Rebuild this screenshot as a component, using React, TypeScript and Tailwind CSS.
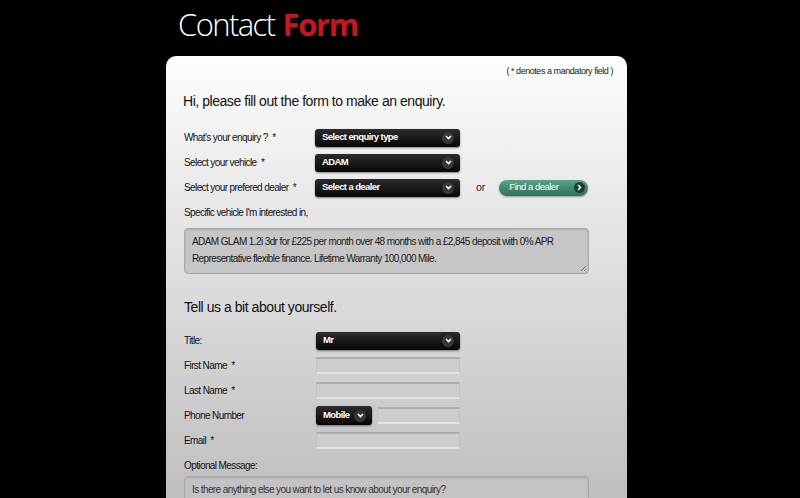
import React from "react";

const font = { fontFamily: '"Liberation Sans", Arial, sans-serif' };

function Chevron({ className = "" }: { className?: string }) {
  return (
    <span
      className={`flex h-[12px] w-[12px] items-center justify-center rounded-full bg-[#383838] ${className}`}
    >
      <svg width="7" height="5" viewBox="0 0 7 5">
        <path d="M1 1 L3.5 3.5 L6 1" fill="none" stroke="#fff" strokeWidth="1.6" />
      </svg>
    </span>
  );
}

function Select({ value, width = "w-[145px]", height = "h-[18px]" }: { value: string; width?: string; height?: string }) {
  return (
    <div
      className={`flex ${width} ${height} items-center justify-between rounded-[3px] bg-gradient-to-b from-[#2c2c2c] to-[#080808] pl-[7px] pr-[6px] text-[9.5px] font-bold tracking-[-0.6px] text-white shadow-[0_1px_2px_rgba(0,0,0,0.45)]`}
    >
      <span>{value}</span>
      <Chevron />
    </div>
  );
}

function Input({ width = "w-[144px]" }: { width?: string }) {
  return (
    <div
      className={`h-[17px] ${width} border border-[#c2c2c2] border-t-2 border-t-[#adadad] border-b-2 border-b-[#e3e3e3] bg-[#cdcdcd]`}
    />
  );
}

function Row({ label, children, labelW = "w-[131px]" }: { label: string; children: React.ReactNode; labelW?: string }) {
  return (
    <div className="flex h-[25px] items-center">
      <div className={`${labelW} whitespace-pre text-[10px] tracking-[-0.6px] text-[#111]`}>{label}</div>
      {children}
    </div>
  );
}

function Grip() {
  return (
    <svg className="absolute bottom-[1px] right-[1px]" width="8" height="8" viewBox="0 0 8 8">
      <path d="M7 2 L2 7 M7 5 L5 7" stroke="#777" strokeWidth="1" />
    </svg>
  );
}

export default function App() {
  return (
    <div className="h-[498px] w-[800px] overflow-hidden bg-black" style={font}>
      <div className="ml-[166px] w-[461px]">
        <div className="h-[56px] pl-[12px] pt-[4px]">
          <h1
            className="text-[31px] leading-[40px] text-white"
            style={{ fontFamily: '"Open Sans", sans-serif', fontWeight: 300 }}
          >
            <span className="tracking-[-1.6px]">Contact</span>{" "}
            <span className="font-bold tracking-[-1.3px] text-[#c8161e]">Form</span>
          </h1>
        </div>

        <div className="h-[442px] rounded-t-[10px] bg-gradient-to-b from-[#fdfdfd] to-[#bfbfbf] pl-[18px] pr-[14px]">
          <div className="pt-[10px] text-right text-[9px] leading-[10px] tracking-[-0.45px] text-[#222]">
            ( * denotes a mandatory field )
          </div>

          <h2 className="mt-[16px] -ml-[1px] text-[14px] leading-[18px] tracking-[-0.45px] text-[#111]">
            Hi, please fill out the form to make an enquiry.
          </h2>

          <div className="mt-[15px]">
            <Row label="What's your enquiry ?  *">
              <Select value="Select enquiry type" />
            </Row>
            <Row label="Select your vehicle  *">
              <Select value="ADAM" />
            </Row>
            <Row label="Select your prefered dealer  *">
              <Select value="Select a dealer" />
              <span className="ml-[16px] text-[10.5px] text-[#222]">or</span>
              <button className="ml-[14px] flex h-[16px] w-[89px] items-center justify-between rounded-full bg-gradient-to-b from-[#5aa488] to-[#2d7158] pl-[10px] pr-[3px] text-[9.5px] tracking-[-0.5px] text-white shadow-[0_1px_2px_rgba(0,0,0,0.35)]">
                <span>Find a dealer</span>
                <span className="flex h-[11px] w-[11px] items-center justify-center rounded-full bg-[#1d3f33]">
                  <svg width="5" height="7" viewBox="0 0 5 7">
                    <path d="M1 1 L3.5 3.5 L1 6" fill="none" stroke="#fff" strokeWidth="1.5" />
                  </svg>
                </span>
              </button>
            </Row>
          </div>

          <div className="flex h-[24px] items-center text-[10px] tracking-[-0.6px] text-[#111]">
            Specific vehicle I'm interested in,
          </div>
          <div className="relative mt-[4px] h-[46px] w-[405px] rounded-[4px] border border-[#a9a9a9] bg-[#c6c6c6] px-[7px] pt-[4px] text-[10px] leading-[17px] tracking-[-0.6px] text-[#1a1a1a] shadow-[inset_0_1px_2px_rgba(0,0,0,0.12)]">
            ADAM GLAM 1.2i 3dr for £225 per month over 48 months with a £2,845 deposit with 0% APR Representative flexible finance. Lifetime Warranty 100,000 Mile.
            <Grip />
          </div>

          <h2 className="mt-[24px] text-[14px] leading-[18px] tracking-[-0.45px] text-[#111]">Tell us a bit about yourself.</h2>

          <div className="mt-[12px]">
            <Row label="Title:" labelW="w-[132px]">
              <Select value="Mr" width="w-[144px]" />
            </Row>
            <Row label="First Name  *" labelW="w-[132px]">
              <Input />
            </Row>
            <Row label="Last Name  *" labelW="w-[132px]">
              <Input />
            </Row>
            <Row label="Phone Number" labelW="w-[132px]">
              <Select value="Mobile" width="w-[56px]" height="h-[19px]" />
              <div className="ml-[5px]">
                <Input width="w-[83px]" />
              </div>
            </Row>
            <Row label="Email  *" labelW="w-[132px]">
              <Input />
            </Row>
          </div>

          <div className="pt-[6px] text-[10px] leading-[14px] tracking-[-0.6px] text-[#111]">Optional Message:</div>
          <div className="relative mt-[3px] h-[60px] w-[405px] rounded-[4px] border border-[#a9a9a9] bg-[#c3c3c3] px-[7px] pt-[4px] text-[10px] leading-[17px] tracking-[-0.6px] text-[#333] shadow-[inset_0_1px_2px_rgba(0,0,0,0.12)]">
            Is there anything else you want to let us know about your enquiry?
          </div>
        </div>
      </div>
    </div>
  );
}
